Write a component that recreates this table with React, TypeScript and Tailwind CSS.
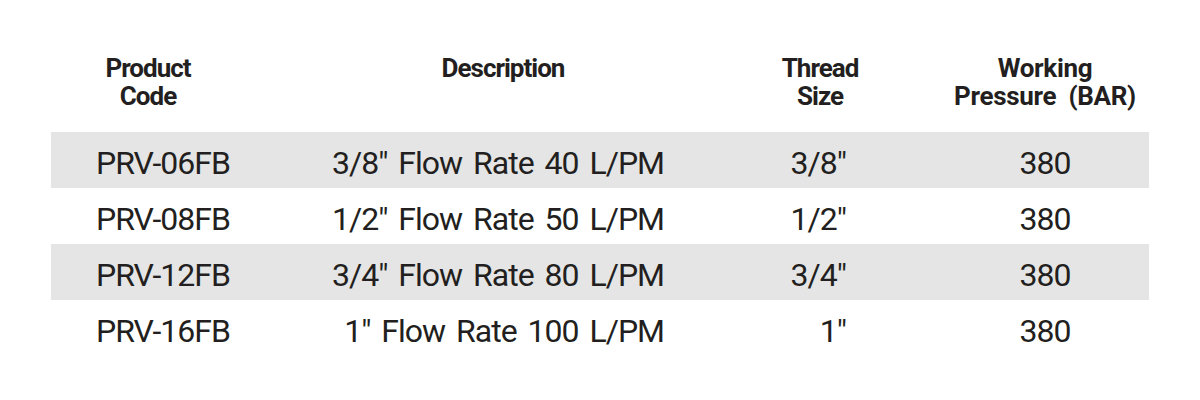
const rows = [
  { code: 'PRV-06FB', desc: '3/8″ Flow Rate 40 L/PM', size: '3/8″', bar: '380' },
  { code: 'PRV-08FB', desc: '1/2″ Flow Rate 50 L/PM', size: '1/2″', bar: '380' },
  { code: 'PRV-12FB', desc: '3/4″ Flow Rate 80 L/PM', size: '3/4″', bar: '380' },
  { code: 'PRV-16FB', desc: '1″ Flow Rate 100 L/PM', size: '1″', bar: '380' },
]

export default function App() {
  return (
    <div className="w-[1200px] h-[400px] bg-white text-[#231f20] font-['Roboto','Liberation_Sans',sans-serif]">
      <div className="ml-[51px] w-[1098px] pt-[54px]">
        {/* Header */}
        <div className="grid grid-cols-[194px_516px_118px_1fr] text-[26px] leading-[28px] font-bold tracking-[-1px] text-center pb-[22px]">
          <div>Product<br />Code</div>
          <div>Description</div>
          <div>Thread<br />Size</div>
          <div className="pl-[62px] tracking-[-0.3px] [word-spacing:6px]">Working<br />Pressure (BAR)</div>
        </div>

        {/* Rows */}
        {rows.map((r, i) => (
          <div
            key={r.code}
            className={`grid grid-cols-[194px_516px_118px_1fr] h-[56px] items-center pt-[6px] text-[32px] leading-none tracking-[-1px] ${i % 2 === 0 ? 'bg-[#e5e5e5]' : ''}`}
          >
            <div className="pl-[45px]">{r.code}</div>
            <div className="text-right pr-[97px] [word-spacing:4px]">{r.desc}</div>
            <div className="text-right pr-[33px]">{r.size}</div>
            <div className="text-center pl-[62px]">{r.bar}</div>
          </div>
        ))}
      </div>
    </div>
  )
}
